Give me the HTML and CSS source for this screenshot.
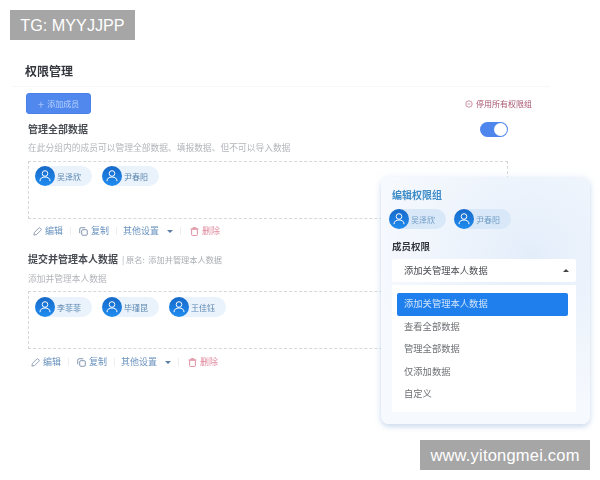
FILE: index.html
```html
<!DOCTYPE html>
<html lang="zh">
<head>
<meta charset="utf-8">
<title>权限管理</title>
<link rel="stylesheet" href="styles.css">
</head>
<body>
<svg class="defs" width="0" height="0">
  <symbol id="user" viewBox="0 0 20 20"><circle cx="10" cy="7.500" r="2.800" fill="none" stroke="#fff" stroke-width="1"/><path d="M5 14.800c0-2.600 2.200-3.800 5-3.800s5 1.200 5 3.800" fill="none" stroke="#fff" stroke-width="1" stroke-linecap="round"/></symbol>
  <symbol id="edit" viewBox="0 0 10 10"><path d="M1 9l.6-3 4.900-4.900a1 1 0 0 1 1.400 0l1 1a1 1 0 0 1 0 1.400L4 8.400z" fill="none" stroke="currentColor" stroke-width=".8" stroke-linejoin="round"/></symbol>
  <symbol id="copy" viewBox="0 0 10 10"><path d="M.8 6.500V2.300A1.500 1.500 0 0 1 2.300.8H6.500" fill="none" stroke="currentColor" stroke-width=".9" stroke-linecap="round"/><rect x="3" y="3" width="6.200" height="6.200" rx="1.200" fill="none" stroke="currentColor" stroke-width=".9"/></symbol>
  <symbol id="trash" viewBox="0 0 10 10"><path d="M1 2.200h8M3.500 .8h3" fill="none" stroke="currentColor" stroke-width=".9" stroke-linecap="round"/><rect x="1.800" y="2.200" width="6.400" height="7.200" rx="1" fill="none" stroke="currentColor" stroke-width=".9"/></symbol>
</svg>
<div class="page">
  <div class="app">
    <header class="header"><h1 class="title">权限管理</h1></header>
    <div class="toolbar">
      <button class="add-btn"><span class="plus">+</span>添加成员</button>
      <span class="disable-all"><svg class="disable-icon" viewBox="0 0 10 10"><circle cx="5" cy="5" r="4" fill="none" stroke="currentColor" stroke-width=".8"/><path d="M3.300 5h3.400" stroke="currentColor" stroke-width=".8"/></svg>停用所有权限组</span>
    </div>

    <section class="group">
      <div class="group-head">
        <h2 class="group-title">管理全部数据</h2>
        <span class="toggle"><span class="knob"></span></span>
      </div>
      <p class="desc">在此分组内的成员可以管理全部数据、填报数据、但不可以导入数据</p>
      <div class="members">
        <span class="chip"><span class="avatar"><svg class="user-icon"><use href="#user"/></svg></span>吴泽欣</span>
        <span class="chip"><span class="avatar"><svg class="user-icon"><use href="#user"/></svg></span>尹春阳</span>
      </div>
      <div class="actions">
        <span class="action"><svg class="act-icon"><use href="#edit"/></svg>编辑</span><i class="sep"></i>
        <span class="action copy"><svg class="act-icon"><use href="#copy"/></svg>复制</span><i class="sep"></i>
        <span class="action">其他设置<b class="caret"></b></span><i class="sep"></i>
        <span class="action danger"><svg class="act-icon"><use href="#trash"/></svg>删除</span>
      </div>
    </section>

    <section class="group second">
      <div class="group-head start">
        <h2 class="group-title">提交并管理本人数据</h2>
        <span class="origin">| 原名:&nbsp;&nbsp;添加并管理本人数据</span>
      </div>
      <p class="desc">添加并管理本人数据</p>
      <div class="members">
        <span class="chip"><span class="avatar"><svg class="user-icon"><use href="#user"/></svg></span>李菲菲</span>
        <span class="chip"><span class="avatar"><svg class="user-icon"><use href="#user"/></svg></span>毕瑾昆</span>
        <span class="chip"><span class="avatar"><svg class="user-icon"><use href="#user"/></svg></span>王佳钰</span>
      </div>
      <div class="actions shifted">
        <span class="action"><svg class="act-icon"><use href="#edit"/></svg>编辑</span><i class="sep"></i>
        <span class="action copy"><svg class="act-icon"><use href="#copy"/></svg>复制</span><i class="sep"></i>
        <span class="action">其他设置<b class="caret"></b></span><i class="sep"></i>
        <span class="action danger"><svg class="act-icon"><use href="#trash"/></svg>删除</span>
      </div>
    </section>

    <aside class="panel">
      <h3 class="panel-title">编辑权限组</h3>
      <div class="panel-members">
        <span class="chip deep"><span class="avatar"><svg class="user-icon"><use href="#user"/></svg></span>吴泽欣</span>
        <span class="chip deep"><span class="avatar"><svg class="user-icon"><use href="#user"/></svg></span>尹春阳</span>
      </div>
      <h4 class="panel-label">成员权限</h4>
      <div class="select">添加关管理本人数据<b class="caret up"></b></div>
      <ul class="options">
        <li class="option selected">添加关管理本人数据</li>
        <li class="option">查看全部数据</li>
        <li class="option">管理全部数据</li>
        <li class="option">仅添加数据</li>
        <li class="option">自定义</li>
      </ul>
    </aside>
  </div>
  <div class="mark mark-top">TG: MYYJJPP</div>
  <div class="mark mark-bottom">www.yitongmei.com</div>
</div>
</body>
</html>
```
FILE: styles.css
```css
* { box-sizing: border-box; }
html, body { margin: 0; padding: 0; background: #fff; }
.defs { position: absolute; }
.page {
  position: relative;
  width: 600px;
  height: 480px;
  overflow: hidden;
  background: #fff;
  font-family: "Noto Sans CJK SC", "Noto Sans", sans-serif;
}
.app { height: 100%; filter: blur(0.4px); }

.header {
  height: 87px;
  margin: 0 50px 0 12px;
  padding: 62px 0 0 13px;
  border-bottom: 1px solid #f6f7f8;
}
.title { margin: 0; font-size: 12px; line-height: 18px; font-weight: 700; color: #33373d; }

.toolbar {
  display: flex;
  justify-content: space-between;
  align-items: center;
  margin-top: 6px;
  padding: 0 68px 0 26px;
}
.add-btn {
  display: flex;
  align-items: center;
  justify-content: center;
  gap: 3px;
  width: 65px;
  height: 21px;
  padding: 0;
  border: 1px solid #4a80e8;
  border-radius: 3px;
  background: #5088ee;
  color: #bcd4fb;
  font: 8px/1 "Noto Sans CJK SC", sans-serif;
}
.plus { font-size: 12px; font-weight: 300; }
.disable-all { display: flex; align-items: center; gap: 3px; font-size: 8px; line-height: 12px; color: #a8576f; }
.disable-icon { width: 8px; height: 8px; }

.group { padding: 0 92px 0 28px; }
.group-head {
  display: flex;
  justify-content: space-between;
  align-items: center;
  height: 16px;
  margin-top: 7px;
}
.group-head.start { justify-content: flex-start; gap: 4px; margin-top: 13px; }
.group-title { margin: 0; font-size: 10px; line-height: 14px; font-weight: 700; color: #484c53; }
.origin { font-size: 8.200px; line-height: 12px; color: #a9adb3; }
.toggle {
  display: flex;
  justify-content: flex-end;
  align-items: center;
  width: 28px;
  height: 15px;
  padding: 1px;
  border-radius: 8px;
  background: #4f86ee;
}
.knob { width: 13px; height: 13px; border-radius: 50%; background: #fff; }
.desc { margin: 5px 0 0; font-size: 8.75px; line-height: 12px; color: #b2b5ba; }
.second .desc { margin-top: 6px; }

.members {
  display: flex;
  align-items: flex-start;
  gap: 10px;
  height: 58px;
  margin-top: 7px;
  padding: 4px 6px;
  border: 1px dashed #d5d7da;
}
.second .members { margin-top: 6px; padding-top: 5px; }
.chip {
  display: flex;
  align-items: center;
  gap: 2px;
  width: 57px;
  height: 20px;
  border-radius: 10px;
  background: #eaf3fc;
  font-size: 8px;
  color: #5a86ae;
}
.chip.deep { background: #d8e8f8; color: #6f9cc6; }
.avatar {
  flex: none;
  width: 20px;
  height: 20px;
  border-radius: 50%;
  background: linear-gradient(#1769c8, #1f8cf0);
}
.user-icon { display: block; width: 20px; height: 20px; }

.actions {
  display: flex;
  align-items: center;
  height: 14px;
  margin-top: 5px;
  padding-left: 5px;
}
.actions.shifted { margin-top: 6px; padding-left: 3px; }
.action { display: flex; align-items: center; gap: 3px; font-size: 9px; line-height: 14px; color: #6a93bf; }
.action.copy { margin-left: 2px; }
.action.danger { margin-left: 3px; color: #e08a9e; }
.act-icon { width: 9px; height: 9px; }
.action .act-icon { color: #6b7fa0; }
.action.danger .act-icon { color: #d9788c; }
.sep { width: 1px; height: 8px; margin: 0 6px 0 7px; background: #eceef1; }
.caret {
  display: inline-block;
  width: 0;
  height: 0;
  margin-left: 5px;
  border: 3px solid transparent;
  border-top: 3px solid #5a7fa8;
  border-bottom: 0;
}
.caret.up {
  margin-left: auto;
  border-top: 0;
  border-bottom: 3px solid #444;
}

.panel {
  position: absolute;
  left: 381px;
  top: 177px;
  width: 209px;
  height: 247px;
  padding: 11px 14px 0 11px;
  border-radius: 8px;
  background: radial-gradient(circle at 72% 32%, #e3edfa 0, #eef4fc 35%, #f6f9fe 70%);
  box-shadow: 0 3px 5px rgba(150, 180, 220, .4), 0 0 8px rgba(200, 220, 240, .3);
}
.panel-title { margin: 0; font-size: 10px; line-height: 14px; font-weight: 700; color: #3e8cc8; }
.panel-members { display: flex; gap: 8px; margin: 7px 0 0 -3px; }
.panel-label { margin: 10px 0 0; font-size: 9.5px; line-height: 14px; font-weight: 700; color: #33373d; }
.select {
  display: flex;
  align-items: center;
  height: 23px;
  margin-top: 6px;
  padding: 0 7px 1px 12px;
  border-radius: 2px;
  background: #fff;
  font-size: 9.3px;
  color: #4a4d52;
}
.options {
  margin: 3px 0 0;
  padding: 8px 8px 0 5px;
  height: 127px;
  list-style: none;
  background: #fff;
}
.option {
  height: 22.500px;
  padding-left: 7px;
  font-size: 9.3px;
  line-height: 21px;
  color: #6e7175;
}
.option.selected { border-radius: 2px; background: #1f7fec; color: #cfe4fb; }

.mark {
  position: absolute;
  height: 30px;
  background: #a6a6a6;
  color: #fff;
  font-family: "Liberation Sans", sans-serif;
  font-size: 16.500px;
  line-height: 30px;
  text-align: center;
}
.mark-top { left: 10px; top: 10px; width: 125px; font-size: 16.200px; }
.mark-bottom { left: 420px; top: 440px; width: 170px; letter-spacing: .2px; }
```
